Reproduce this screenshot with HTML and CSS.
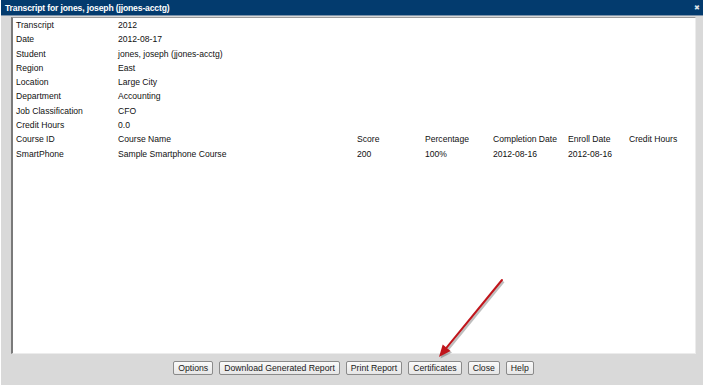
FILE: index.html
```html
<!DOCTYPE html>
<html lang="en">
<head>
<meta charset="UTF-8" />
<title>Transcript</title>
<link rel="stylesheet" href="styles.css">
</head>
<body>

<div class="dialog">
  <!-- title bar -->
  <div class="titlebar">
    <span class="title">Transcript for jones, joseph (jjones-acctg)</span>
    <span class="close">&#x2716;</span>
  </div>

  <!-- report area -->
  <div class="content">
    <div class="panel">
      <div class="row"><span>Transcript</span><span>2012</span></div>
      <div class="row"><span>Date</span><span>2012-08-17</span></div>
      <div class="row"><span>Student</span><span>jones, joseph (jjones-acctg)</span></div>
      <div class="row"><span>Region</span><span>East</span></div>
      <div class="row"><span>Location</span><span>Large City</span></div>
      <div class="row"><span>Department</span><span>Accounting</span></div>
      <div class="row"><span>Job Classification</span><span>CFO</span></div>
      <div class="row"><span>Credit Hours</span><span>0.0</span></div>
      <div class="row">
        <span>Course ID</span><span>Course Name</span><span>Score</span><span>Percentage</span>
        <span>Completion Date</span><span>Enroll Date</span><span>Credit Hours</span>
      </div>
      <div class="row">
        <span>SmartPhone</span><span>Sample Smartphone Course</span><span>200</span><span>100%</span>
        <span>2012-08-16</span><span>2012-08-16</span><span></span>
      </div>
    </div>
  </div>

  <!-- buttons -->
  <div class="buttons">
    <button>Options</button>
    <button>Download Generated Report</button>
    <button>Print Report</button>
    <button>Certificates</button>
    <button>Close</button>
    <button>Help</button>
  </div>
</div>

<!-- callout arrow drawn over the dialog -->
<svg class="arrow" width="80" height="90" viewBox="0 0 80 90">
  <g transform="translate(1.5,1.5)" opacity="0.25">
    <line x1="72" y1="5" x2="16.6" y2="72.7" stroke="#000" stroke-width="2.4" />
    <polygon points="9,82 20.5,75.9 12.7,69.5" fill="#000" />
  </g>
  <line x1="72" y1="5" x2="16.6" y2="72.7" stroke="#c0151b" stroke-width="2" stroke-linecap="round" />
  <polygon points="9,82 20.5,75.9 12.7,69.5" fill="#c0151b" />
</svg>

</body>
</html>
```

FILE: styles.css
```css
body {
  margin: 0;
  background: #fff;
  font-family: "Liberation Sans", Arial, sans-serif;
  font-size: 8.6px;
  color: #111;
}
.dialog {
  width: 702px;
  margin-left: 1px;
  background: #d9d9d9;
}
.titlebar {
  height: 15px;
  background: #033b6e;
  border-bottom: 1px solid #7d93aa;
  display: flex;
  align-items: center;
  justify-content: space-between;
  padding: 0 3px 0 4px;
  color: #fff;
}
.title {
  font-weight: bold;
  font-size: 8.6px;
  letter-spacing: -0.15px;
}
.close {
  font-size: 7px;
  color: #dde3ea;
}
.content {
  padding: 1px 7px 0 10px;
}
.panel {
  height: 335px;
  background: #fff;
  border-top: 1px solid #9a9a9a;
  border-left: 2px solid #7a7a7a;
  border-right: 1px solid #ececec;
  border-bottom: 1px solid #ececec;
  padding-left: 3px;
}
.row {
  display: grid;
  grid-template-columns: 102px 239px 68px 68px 75px 61px 1fr;
  line-height: 14.3px;
}
.buttons {
  height: 27px;
  padding: 0 0 4px 3px;
  display: flex;
  justify-content: center;
  align-items: center;
  gap: 6px;
}
.buttons button {
  height: 14px;
  padding: 0 4px;
  font-family: "Liberation Sans", Arial, sans-serif;
  font-size: 8.7px;
  color: #1a1a1a;
  background: linear-gradient(#fafafa, #e6e6e6);
  border: 1px solid #8a8a8a;
  border-radius: 2px;
}
.arrow {
  position: absolute;
  left: 430px;
  top: 275px;
}
```
